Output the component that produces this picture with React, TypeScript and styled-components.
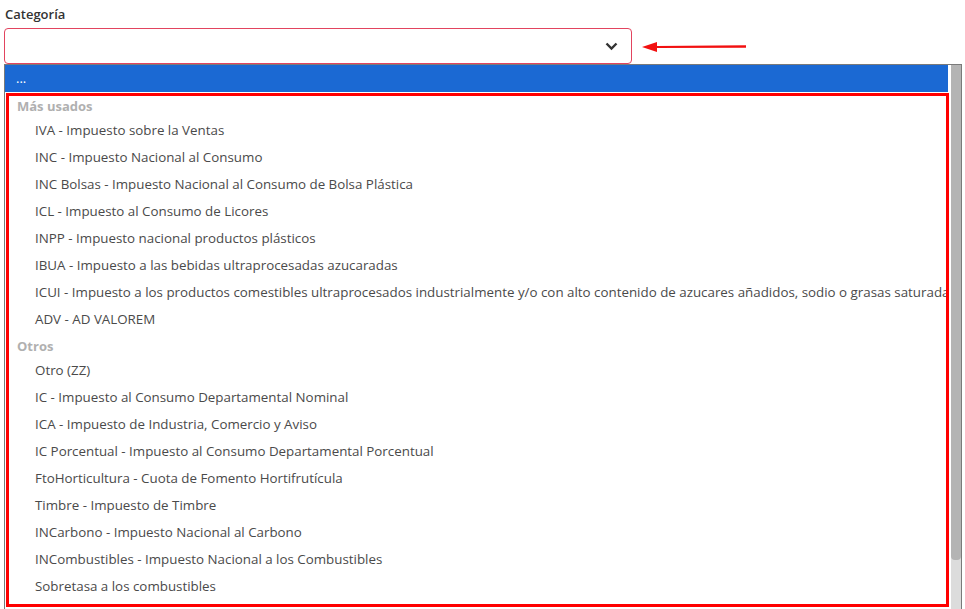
import styled, { createGlobalStyle } from "styled-components";

const GlobalStyle = createGlobalStyle`
    html, body {
        margin: 0;
        padding: 0;
        background: #fff;
        overflow: hidden;
    }
    body {
        font-family: "Open Sans", "Noto Sans", sans-serif;
        color: #444;
    }
`;

const Page = styled.div`
    position: relative;
    width: 965px;
    height: 609px;
    padding: 4px 0 0 4px;
    box-sizing: border-box;
    overflow: hidden;
`;

const Label = styled.label`
    display: block;
    height: 24px;
    padding-left: 1px;
    font-size: 13px;
    font-weight: 600;
    color: #333;
    line-height: 20px;
`;

const SelectRow = styled.div`
    display: flex;
    align-items: center;
`;

const SelectBox = styled.div`
    width: 628px;
    height: 36px;
    box-sizing: border-box;
    border: 1px solid #e2445f;
    border-radius: 4px;
    display: flex;
    align-items: center;
    justify-content: flex-end;
    padding-right: 13px;
`;

const Arrow = styled.svg`
    margin-left: 10px;
    margin-top: 1px;
`;

const ListBox = styled.div`
    width: 958px;
    height: 560px;
    box-sizing: border-box;
    border: 1px solid #7a7a7a;
    display: flex;
    background: #fff;
`;

const Options = styled.div`
    flex: 1;
    min-width: 0;
    overflow: hidden;
`;

const Selected = styled.div`
    height: 27px;
    background: #1b69d3;
    color: #fff;
    font-size: 13px;
    line-height: 27px;
    padding-left: 11px;
`;

const Group = styled.div<{ $tight?: boolean }>`
    height: ${(p) => (p.$tight ? "24px" : "25px")};
    padding-left: 12px;
    padding-top: ${(p) => (p.$tight ? "1px" : "2px")};
    box-sizing: border-box;
    font-size: 13px;
    font-weight: 700;
    color: #b0b0b0;
    line-height: 24px;
`;

const Item = styled.div`
    height: 27px;
    line-height: 27px;
    padding-left: 30px;
    font-size: 13.35px;
    color: #4a4a4a;
    white-space: nowrap;
`;

const Scrollbar = styled.div`
    width: 10px;
    margin-left: 3px;
    background: #dcdcdc;
    display: flex;
    flex-direction: column;
`;

const Thumb = styled.div`
    height: 495px;
    background: #b4b4b4;
    border-radius: 0 0 4px 4px;
`;

const Highlight = styled.div`
    position: absolute;
    left: 6px;
    top: 93px;
    width: 943px;
    height: 514px;
    box-sizing: border-box;
    border: 3px solid #ff0000;
    pointer-events: none;
`;

const masUsados = [
    "IVA - Impuesto sobre la Ventas",
    "INC - Impuesto Nacional al Consumo",
    "INC Bolsas - Impuesto Nacional al Consumo de Bolsa Plástica",
    "ICL - Impuesto al Consumo de Licores",
    "INPP - Impuesto nacional productos plásticos",
    "IBUA - Impuesto a las bebidas ultraprocesadas azucaradas",
    "ICUI - Impuesto a los productos comestibles ultraprocesados industrialmente y/o con alto contenido de azucares añadidos, sodio o grasas saturadas",
    "ADV - AD VALOREM",
];

const otros = [
    "Otro (ZZ)",
    "IC - Impuesto al Consumo Departamental Nominal",
    "ICA - Impuesto de Industria, Comercio y Aviso",
    "IC Porcentual - Impuesto al Consumo Departamental Porcentual",
    "FtoHorticultura - Cuota de Fomento Hortifrutícula",
    "Timbre - Impuesto de Timbre",
    "INCarbono - Impuesto Nacional al Carbono",
    "INCombustibles - Impuesto Nacional a los Combustibles",
    "Sobretasa a los combustibles",
];

function App() {
    return (
        <Page>
            <GlobalStyle />
            <Label>Categoría</Label>
            <SelectRow>
                <SelectBox>
                    <svg width="13" height="9" viewBox="0 0 13 9">
                        <path d="M1.5 1.5 L6.5 6.5 L11.5 1.5" fill="none" stroke="#333" strokeWidth="2.4" />
                    </svg>
                </SelectBox>
                <Arrow width="106" height="12" viewBox="0 0 106 12">
                    <path d="M14 5 L104 4.2 L104 6.8 L14 7 Z" fill="#f21010" />
                    <path d="M0 6 L15 1 L15 11 Z" fill="#f21010" />
                </Arrow>
            </SelectRow>
            <ListBox>
                <Options>
                    <Selected>...</Selected>
                    <Group>Más usados</Group>
                    {masUsados.map((t) => <Item key={t}>{t}</Item>)}
                    <Group $tight>Otros</Group>
                    {otros.map((t) => <Item key={t}>{t}</Item>)}
                </Options>
                <Scrollbar>
                    <Thumb />
                </Scrollbar>
            </ListBox>
            <Highlight />
        </Page>
    );
}

export default App;
